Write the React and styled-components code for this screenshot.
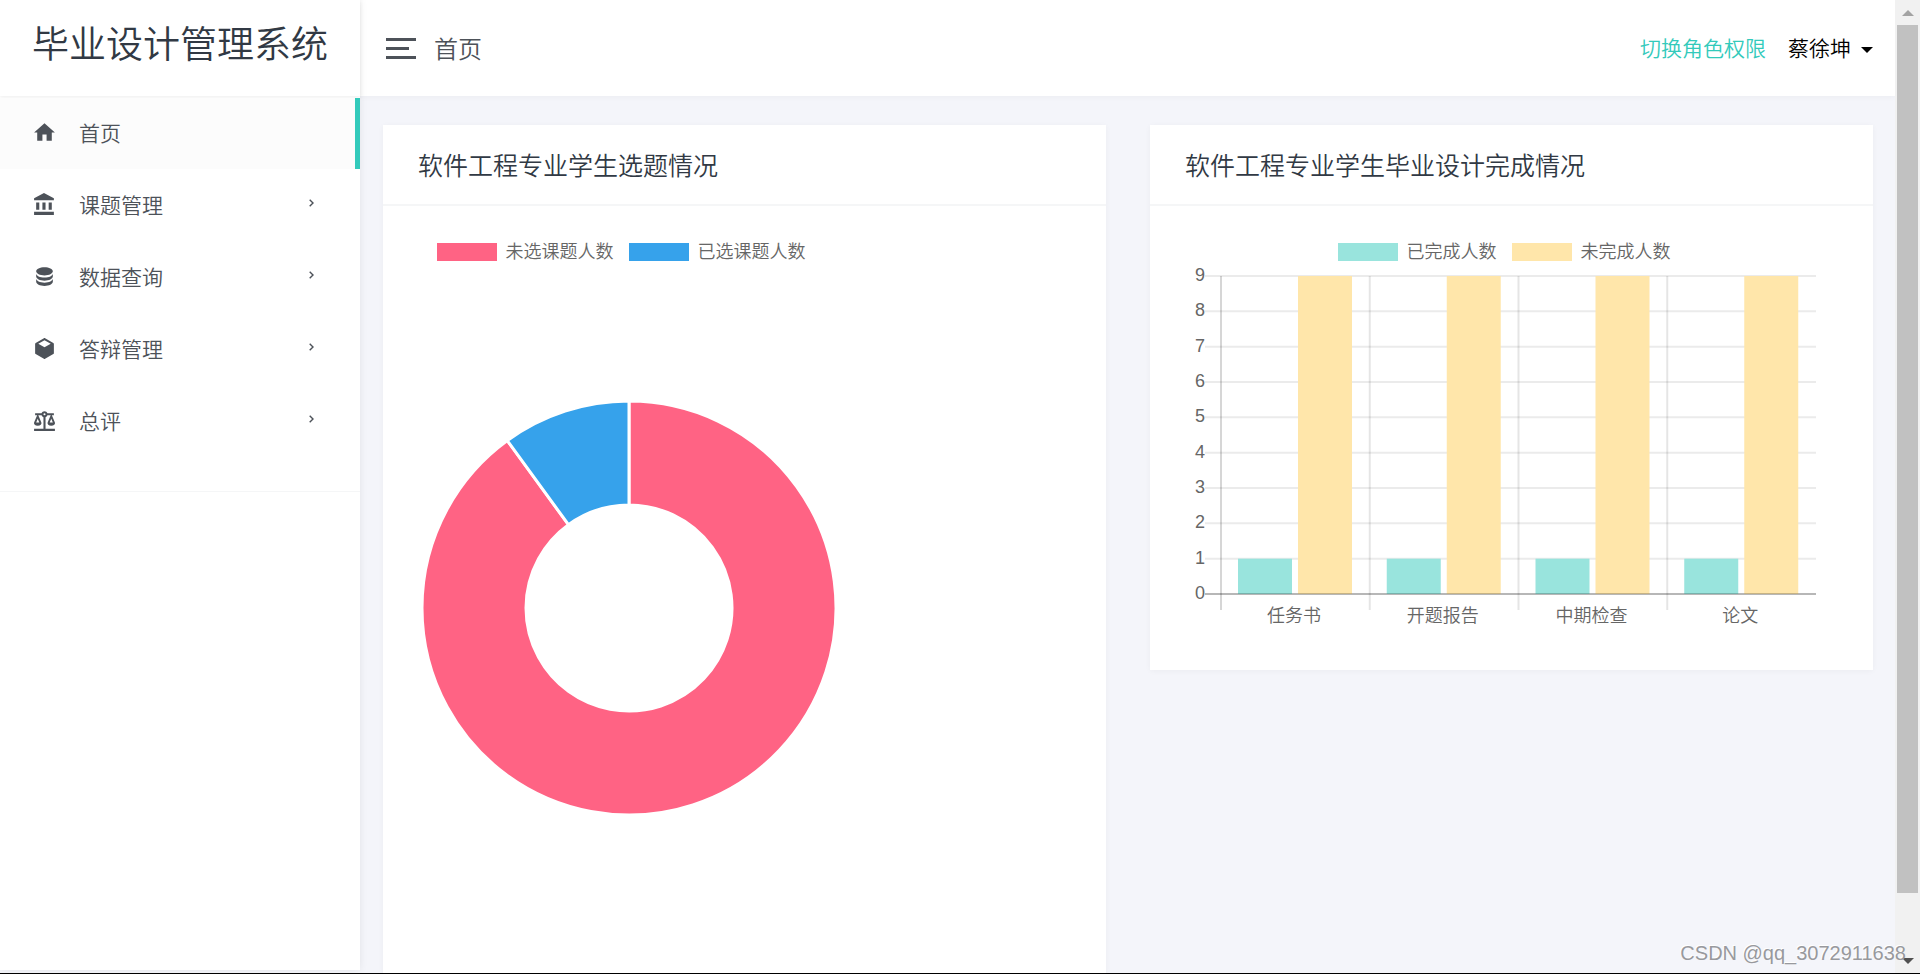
import styled, { createGlobalStyle } from "styled-components";

const theme = {
  primary: "#33cabb",
  text: "#4d5259",
  heading: "#313944",
  chartText: "#666666",
  line: "#f5f6f7",
  page: "#f4f5fa",
  pink: "#ff6384",
  blue: "#36a2eb",
  mint: "#99e4dd",
  sand: "#ffe6aa",
};

const icons = {
  home: "M10,20V14H14V20H19V12H22L12,3L2,12H5V20H10Z",
  bank: "M11.5,1L2,6V8H21V6M16,10V17H19V10M2,22H21V19H2M10,10V17H13V10M4,10V17H7V10H4Z",
  database:
    "M12,3C7.58,3 4,4.79 4,7C4,9.21 7.58,11 12,11C16.42,11 20,9.21 20,7C20,4.79 16.42,3 12,3M4,9V12C4,14.21 7.58,16 12,16C16.42,16 20,14.21 20,12V9C20,11.21 16.42,13 12,13C7.58,13 4,11.21 4,9M4,14V17C4,19.21 7.58,21 12,21C16.42,21 20,19.21 20,17V14C20,16.21 16.42,18 12,18C7.58,18 4,16.21 4,14Z",
  cube: "M21,16.5C21,16.88 20.79,17.21 20.47,17.38L12.57,21.82C12.41,21.94 12.21,22 12,22C11.79,22 11.59,21.94 11.43,21.82L3.53,17.38C3.21,17.21 3,16.88 3,16.5V7.5C3,7.12 3.21,6.79 3.53,6.62L11.43,2.18C11.59,2.06 11.79,2 12,2C12.21,2 12.41,2.06 12.57,2.18L20.47,6.62C20.79,6.79 21,7.12 21,7.5V16.5M12,4.15L6.04,7.5L12,10.85L17.96,7.5L12,4.15Z",
  scale:
    "M12,3C10.73,3 9.6,3.8 9.18,5H3V7H4.95L2,14C1.53,16 3,17 5.5,17C8,17 9.56,16 9,14L6.05,7H9.17C9.5,7.85 10.15,8.5 11,8.83V20H2V22H22V20H13V8.82C13.85,8.5 14.5,7.85 14.82,7H17.95L15,14C14.53,16 16,17 18.5,17C21,17 22.56,16 22,14L19.05,7H21V5H14.83C14.4,3.8 13.27,3 12,3M12,5A1,1 0 0,1 13,6A1,1 0 0,1 12,7A1,1 0 0,1 11,6A1,1 0 0,1 12,5M5.5,10.25L7,14H4L5.5,10.25M18.5,10.25L20,14H17L18.5,10.25Z",
};

const menu = [
  { label: "首页", icon: "home", active: true },
  { label: "课题管理", icon: "bank" },
  { label: "数据查询", icon: "database" },
  { label: "答辩管理", icon: "cube" },
  { label: "总评", icon: "scale" },
];

const topics = [
  { label: "未选课题人数", value: 9, color: theme.pink },
  { label: "已选课题人数", value: 1, color: theme.blue },
];

const stages = [
  { label: "任务书", done: 1, open: 9 },
  { label: "开题报告", done: 1, open: 9 },
  { label: "中期检查", done: 1, open: 9 },
  { label: "论文", done: 1, open: 9 },
];

const progress = [
  { label: "已完成人数", color: theme.mint },
  { label: "未完成人数", color: theme.sand },
];

export default function App() {
  return (
    <Page>
      <GlobalStyle />
      <Sidebar>
        <Logo>毕业设计管理系统</Logo>
        <Menu>
          {menu.map((item) => (
            <MenuItem key={item.label} href="#" $active={item.active}>
              <MenuIcon viewBox="0 0 24 24">
                <path d={icons[item.icon]} />
              </MenuIcon>
              <MenuLabel>{item.label}</MenuLabel>
              {!item.active && (
                <Chevron viewBox="0 0 5 8">
                  <path d="M0.7 0.7L4 4L0.7 7.3" />
                </Chevron>
              )}
            </MenuItem>
          ))}
        </Menu>
      </Sidebar>
      <Content>
        <Header>
          <MenuToggle aria-label="菜单">
            <ToggleBar />
            <ToggleBar $short />
            <ToggleBar />
          </MenuToggle>
          <PageTitle>首页</PageTitle>
          <RoleLink href="#">切换角色权限</RoleLink>
          <UserButton>
            蔡徐坤
            <Caret />
          </UserButton>
        </Header>
        <Main>
          <Card $tall>
            <CardHeader>软件工程专业学生选题情况</CardHeader>
            <CardBody>
              <Legend items={topics} width="404px" />
              <Doughnut data={topics} />
            </CardBody>
          </Card>
          <Card>
            <CardHeader>软件工程专业学生毕业设计完成情况</CardHeader>
            <CardBody>
              <Legend items={progress} width="636px" />
              <BarChart data={stages} />
            </CardBody>
          </Card>
        </Main>
      </Content>
      <Scrollbar>
        <Arrow viewBox="0 0 12 6">
          <path d="M0 6L6 0L12 6Z" fill="#a3a3a3" />
        </Arrow>
        <Thumb />
        <Arrow viewBox="0 0 12 6">
          <path d="M0 0L6 6L12 0Z" fill="#505050" />
        </Arrow>
      </Scrollbar>
      <Watermark>CSDN @qq_3072911638</Watermark>
    </Page>
  );
}

function Legend({ items, width }) {
  return (
    <LegendRow $width={width}>
      {items.map((item) => (
        <LegendItem key={item.label}>
          <Swatch $color={item.color} />
          {item.label}
        </LegendItem>
      ))}
    </LegendRow>
  );
}

function Doughnut({ data }) {
  const total = data.reduce((sum, item) => sum + item.value, 0);
  const point = (radius, share) => {
    const angle = share * Math.PI * 2;
    return `${210 + radius * Math.sin(angle)} ${210 - radius * Math.cos(angle)}`;
  };
  let start = 0;

  return (
    <DoughnutSvg viewBox="0 0 420 420">
      {data.map((item) => {
        const from = start;
        const to = start + item.value / total;
        const large = to - from > 0.5 ? 1 : 0;
        start = to;
        return (
          <path
            key={item.label}
            fill={item.color}
            stroke="#fff"
            strokeWidth="3"
            d={`M${point(207, from)}A207 207 0 ${large} 1 ${point(207, to)}L${point(103, to)}A103 103 0 ${large} 0 ${point(103, from)}Z`}
          />
        );
      })}
    </DoughnutSvg>
  );
}

function BarChart({ data }) {
  const left = 35;
  const right = 630;
  const top = 8;
  const bottom = 326;
  const step = (right - left) / data.length;
  const y = (value) => bottom - (value * (bottom - top)) / 9;

  return (
    <BarSvg viewBox="0 0 634 366">
      {[0, 1, 2, 3, 4, 5, 6, 7, 8, 9].map((tick) => (
        <g key={tick}>
          <path
            d={`M${left - 16} ${y(tick)}H${right}`}
            stroke="rgba(0,0,0,0.08)"
            strokeWidth="2"
          />
          <text x="19" y={y(tick) + 5} textAnchor="end">
            {tick}
          </text>
        </g>
      ))}
      {data.map((item, i) => (
        <g key={item.label}>
          <path
            d={`M${left + i * step} ${top}V${bottom + 16}`}
            stroke={i ? "rgba(0,0,0,0.1)" : "rgba(0,0,0,0.16)"}
            strokeWidth="2"
          />
          <rect
            x={left + 17 + i * step}
            y={y(item.done)}
            width="54"
            height={bottom - y(item.done)}
            fill={theme.mint}
          />
          <rect
            x={left + 77 + i * step}
            y={y(item.open)}
            width="54"
            height={bottom - y(item.open)}
            fill={theme.sand}
          />
          <text x={left + 73 + i * step} y="354" textAnchor="middle">
            {item.label}
          </text>
        </g>
      ))}
      <path
        d={`M${left - 16} ${bottom}H${right}`}
        stroke="rgba(0,0,0,0.22)"
        strokeWidth="2"
      />
    </BarSvg>
  );
}

const GlobalStyle = createGlobalStyle`
  * {
    box-sizing: border-box;
  }

  body {
    margin: 0;
    background: ${theme.page};
    color: ${theme.text};
    font-family: "Liberation Sans", "Noto Sans CJK SC", sans-serif;
    font-size: 21px;
    font-weight: 350;
  }

  a {
    color: inherit;
    text-decoration: none;
  }

  button {
    padding: 0;
    border: 0;
    background: none;
    font: inherit;
    cursor: pointer;
  }
`;

const Page = styled.div`
  position: relative;
  display: flex;
  height: 100vh;
  overflow: hidden;
  border-bottom: 1px solid #000;
`;

const Sidebar = styled.aside`
  flex: 0 0 360px;
  margin-bottom: 3px;
  background: #fff;
  box-shadow: 0 0 8px rgba(0, 0, 0, 0.08);
  z-index: 1;
`;

const Logo = styled.h1`
  height: 96px;
  margin: 0 0 2px;
  padding-left: 32px;
  color: ${theme.heading};
  font-size: 37px;
  font-weight: inherit;
  line-height: 92px;
  white-space: nowrap;
  box-shadow: 0 1px 4px rgba(0, 0, 0, 0.08);
`;

const Menu = styled.nav`
  display: flex;
  flex-direction: column;
  gap: 1px;
  padding-bottom: 34px;
  border-bottom: 1px solid ${theme.line};
`;

const MenuItem = styled.a`
  display: flex;
  align-items: center;
  height: 71px;
  padding: 0 41px 3px 32px;
  border-right: 5px solid ${(props) => (props.$active ? theme.primary : "transparent")};
  background: ${(props) => (props.$active ? "#fcfcfc" : "none")};
`;

const MenuIcon = styled.svg`
  width: 25px;
  height: 25px;
  margin-right: 22px;
  fill: currentColor;
`;

const MenuLabel = styled.span`
  flex: 1;
`;

const Chevron = styled.svg`
  width: 5px;
  height: 8px;
  margin-bottom: 2px;
  fill: none;
  stroke: currentColor;
  stroke-width: 1.4;
`;

const Content = styled.div`
  display: flex;
  flex: 1;
  flex-direction: column;
  min-width: 0;
`;

const Header = styled.header`
  display: flex;
  flex: 0 0 96px;
  align-items: center;
  padding: 0 22px 0 26px;
  background: #fff;
  box-shadow: 0 1px 6px rgba(0, 0, 0, 0.04);
`;

const MenuToggle = styled.button`
  display: flex;
  flex-direction: column;
  gap: 6px;
  width: 30px;
  margin-right: 18px;
`;

const ToggleBar = styled.span`
  width: ${(props) => (props.$short ? "23px" : "30px")};
  height: 3px;
  background: ${theme.text};
`;

const PageTitle = styled.h2`
  flex: 1;
  margin: 0;
  padding-bottom: 2px;
  font-size: 24px;
  font-weight: inherit;
`;

const RoleLink = styled.a`
  margin-right: 22px;
  padding-bottom: 2px;
  color: ${theme.primary};
`;

const UserButton = styled.button`
  display: flex;
  align-items: center;
  gap: 10px;
  padding-bottom: 2px;
  color: #000;
`;

const Caret = styled.span`
  margin-top: 6px;
  border: 6px solid transparent;
  border-top-color: #000;
  border-bottom: 0;
`;

const Main = styled.main`
  display: grid;
  grid-template-columns: 1fr 1fr;
  align-items: start;
  gap: 44px;
  flex: 1;
  min-height: 0;
  padding: 29px 22px 0 23px;
`;

const Card = styled.section`
  min-height: ${(props) => (props.$tall ? "100%" : "0")};
  background: #fff;
  box-shadow: 0 1px 6px rgba(0, 0, 0, 0.04);
`;

const CardHeader = styled.h3`
  margin: 0;
  padding: 21px 35px 18px;
  border-bottom: 2px solid ${theme.line};
  color: ${theme.heading};
  font-size: 25px;
  font-weight: inherit;
  line-height: 40px;
`;

const CardBody = styled.div`
  padding: 35px 36px 36px;
  color: ${theme.chartText};
  font-size: 18px;
`;

const LegendRow = styled.div`
  display: flex;
  justify-content: center;
  gap: 15px;
  max-width: ${(props) => props.$width};
  line-height: 22px;
`;

const LegendItem = styled.span`
  display: flex;
  align-items: center;
  gap: 9px;
  white-space: nowrap;
`;

const Swatch = styled.i`
  width: 60px;
  height: 18px;
  background: ${(props) => props.$color};
`;

const DoughnutSvg = styled.svg`
  display: block;
  width: 100%;
  max-width: 420px;
  margin-top: 135px;
`;

const BarSvg = styled.svg`
  display: block;
  width: 100%;
  max-width: 634px;
  margin-top: 5px;
  overflow: visible;
  fill: ${theme.chartText};
`;

const Scrollbar = styled.div`
  display: flex;
  flex: 0 0 25px;
  flex-direction: column;
  align-items: center;
  padding: 10px 0 9px;
  background: #f1f1f1;
  z-index: 1;
`;

const Arrow = styled.svg`
  width: 12px;
  height: 6px;
`;

const Thumb = styled.div`
  width: 21px;
  height: 91%;
  margin: 9px 0 auto;
  background: #c1c1c1;
`;

const Watermark = styled.div`
  position: absolute;
  right: 14px;
  bottom: 8px;
  color: #98999d;
  font-size: 20px;
  text-shadow: -1px -1px 0 #fff;
  z-index: 2;
`;
